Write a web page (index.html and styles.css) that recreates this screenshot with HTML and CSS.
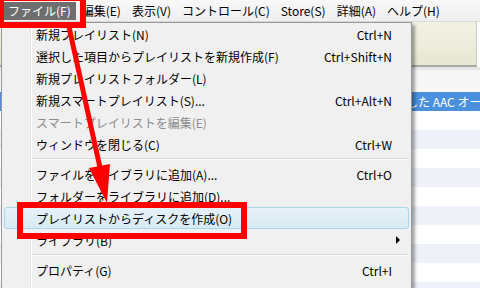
FILE: index.html
```html
<!DOCTYPE html>
<html lang="ja">
<head>
  <meta charset="UTF-8">
  <title>iTunes ファイルメニュー</title>
  <link rel="stylesheet" href="styles.css">
</head>
<body>
  <div class="window">
    <div class="menubar">
      <span class="mb-item active">ファイル(F)</span>
      <span class="mb-item">編集(E)</span>
      <span class="mb-item">表示(V)</span>
      <span class="mb-item">コントロール(C)</span>
      <span class="mb-item">Store(S)</span>
      <span class="mb-item">詳細(A)</span>
      <span class="mb-item">ヘルプ(H)</span>
    </div>
    <div class="infobar"></div>
    <div class="list">
      <div class="list-head"></div>
      <div class="row selected">した AAC オーディオファイル</div>
      <div class="row"></div>
      <div class="row alt"></div>
      <div class="row"></div>
      <div class="row alt"></div>
      <div class="row"></div>
      <div class="row alt"></div>
      <div class="row"></div>
      <div class="row alt"></div>
      <div class="row"></div>
      <div class="row alt"></div>
    </div>

    <!-- dropdown -->
    <div class="menu">
      <div class="item"><span class="label">新規プレイリスト(N)</span><span class="key">Ctrl+N</span></div>
      <div class="item"><span class="label">選択した項目からプレイリストを新規作成(F)</span><span class="key">Ctrl+Shift+N</span></div>
      <div class="item"><span class="label">新規プレイリストフォルダー(L)</span></div>
      <div class="item"><span class="label">新規スマートプレイリスト(S)...</span><span class="key">Ctrl+Alt+N</span></div>
      <div class="item disabled"><span class="label">スマートプレイリストを編集(E)</span></div>
      <div class="item"><span class="label">ウィンドウを閉じる(C)</span><span class="key">Ctrl+W</span></div>
      <div class="sep"></div>
      <div class="item"><span class="label">ファイルをライブラリに追加(A)...</span><span class="key">Ctrl+O</span></div>
      <div class="item"><span class="label">フォルダーをライブラリに追加(D)...</span></div>
      <div class="item hover"><span class="label">プレイリストからディスクを作成(O)</span></div>
      <div class="item"><span class="label">ライブラリ(B)</span><span class="arrow"></span></div>
      <div class="sep"></div>
      <div class="item"><span class="label">プロパティ(G)</span><span class="key">Ctrl+I</span></div>
      <div class="item"><span class="label">レート(R)</span></div>
    </div>

    <!-- annotation -->
    <svg class="marks" width="480" height="288" viewBox="0 0 480 288">
      <rect x="1" y="-2" width="82" height="27" fill="none" stroke="#ff0000" stroke-width="6"/>
      <rect x="20" y="205" width="224" height="31" fill="none" stroke="#ff0000" stroke-width="6"/>
      <line x1="69" y1="27" x2="101" y2="172" stroke="#ff0000" stroke-width="5"/>
      <polygon points="89,168 110,164 107,203" fill="#ff0000"/>
    </svg>
  </div>
</body>
</html>
```

FILE: styles.css
```css
body { margin: 0; font-family: "Noto Sans CJK JP", "Noto Sans", sans-serif; font-size: 12px; color: #000; }
.window { position: relative; width: 480px; height: 288px; overflow: hidden; background: #fff; }

.menubar { display: flex; height: 22px; padding-left: 2px; background: linear-gradient(#f8f8f8, #eeeeee); border-bottom: 1px solid #d9d9d9; box-sizing: border-box; align-items: center; }
.mb-item { padding: 0 5px 0 6px; line-height: 18px; white-space: nowrap; }
.mb-item.active { background: #6e6e6e; color: #fff; }

.infobar { height: 43px; background: linear-gradient(#f1f2e4, #e7e8d1); border-bottom: 2px solid #a8a8a0; border-right: 1px solid #c8c8c0; margin-right: 3px; }
.list { border-top: 3px solid #e6e6e6; }
.list-head { height: 22px; background: #f7f7f7; }
.row { height: 19px; line-height: 19px; padding-left: 406px; white-space: nowrap; overflow: hidden; }
.row.alt { background: #eef2f8; }
.row.selected { background: #4b90dd; color: #fff; }

.menu { position: absolute; top: 22px; left: 1px; width: 411px; height: 290px; box-sizing: border-box; border: 1px solid #979797;
  background: linear-gradient(to right, transparent 28px, #e2e3e3 28px, #e2e3e3 29px, #fff 29px, #fff 30px, transparent 30px), #f0f0f0;
  box-shadow: 3px 3px 3px rgba(0, 0, 0, 0.35); }
.item { display: flex; align-items: center; height: 22px; margin: 0 2px; padding: 0 16px 0 31px; border: 1px solid transparent; border-radius: 3px; box-sizing: border-box; white-space: nowrap; }
.item .label { flex: 1; }
.item.disabled { color: #8d8d8d; }
.item.hover { background: linear-gradient(#e6f1f8, #d8eaf4); border-color: #a8d6ea; }
.arrow { width: 0; height: 0; margin-right: -8px; border-left: 4px solid #000; border-top: 4px solid transparent; border-bottom: 4px solid transparent; }
.sep { height: 8px; margin-left: 30px; margin-right: 2px; background: linear-gradient(transparent 3px, #d7d7d7 3px, #d7d7d7 4px, #fff 4px, #fff 5px, transparent 5px); }

.marks { position: absolute; top: 0; left: 0; pointer-events: none; }
```
